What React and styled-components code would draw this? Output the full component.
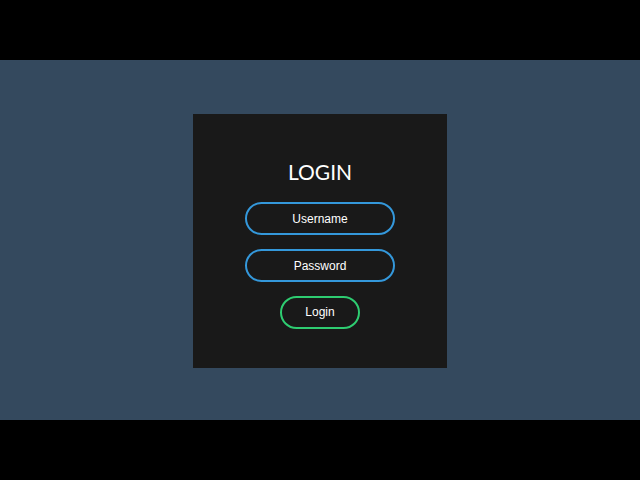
import React from 'react';
import styled, {createGlobalStyle} from "styled-components";

const GlobalStyle = createGlobalStyle`
    html, body {
        margin: 0;
        padding: 0;
        background: #000000;
    }
`

const Page = styled.div`
    width: 640px;
    height: 480px;
    display: flex;
    flex-direction: column;
`

const Bar = styled.div`
    height: 60px;
    background: #000000;
`

const Stage = styled.div`
    height: 360px;
    background: #34495e;
    display: flex;
    align-items: center;
    justify-content: center;
`

const Card = styled.form`
    width: 254px;
    height: 254px;
    box-sizing: border-box;
    margin-top: 2px;
    padding-top: 45px;
    background: #191919;
    display: flex;
    flex-direction: column;
    align-items: center;
`

const Title = styled.h1`
    margin: 0 0 17px;
    font-family: "Lato", "Noto Sans", sans-serif;
    font-weight: 400;
    font-size: 21px;
    line-height: 26px;
    color: #ffffff;
`

const Field = styled.div`
    width: 150px;
    height: 33px;
    box-sizing: border-box;
    margin-bottom: 14px;
    border: 2px solid ${p => p.accent};
    border-radius: 24px;
    display: flex;
    align-items: center;
    justify-content: center;
    font-family: "Liberation Sans", Arial, sans-serif;
    font-size: 12px;
    color: #ffffff;
`

const LoginButton = styled(Field)`
    width: 80px;
    margin-bottom: 0;
    padding-bottom: 1px;
`

const App = () => {
    return (
        <>
            <GlobalStyle/>
            <Page>
                <Bar/>
                <Stage>
                    <Card>
                        <Title>LOGIN</Title>
                        <Field accent="#3498db">Username</Field>
                        <Field accent="#3498db">Password</Field>
                        <LoginButton accent="#2ecc71">Login</LoginButton>
                    </Card>
                </Stage>
                <Bar/>
            </Page>
        </>
    )
}

export default App
